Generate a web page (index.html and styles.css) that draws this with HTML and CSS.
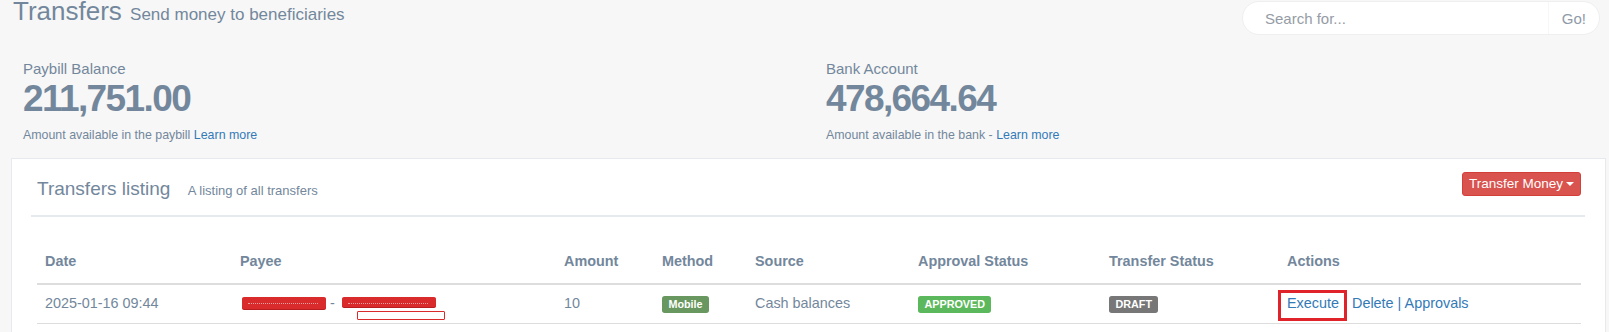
FILE: index.html
```html
<!DOCTYPE html>
<html lang="en">
<head>
<meta charset="utf-8">
<title>Transfers</title>
<link rel="stylesheet" href="styles.css">
</head>
<body>
<div class="page">
  <header class="page-title">
    <h3 class="title">Transfers <small>Send money to beneficiaries</small></h3>
    <form class="search">
      <input type="text" placeholder="Search for...">
      <button type="button">Go!</button>
    </form>
  </header>

  <section class="tiles">
    <div class="tile">
      <div class="tile-label">Paybill Balance</div>
      <div class="tile-count">211,751.00</div>
      <div class="tile-bottom">Amount available in the paybill <a href="#">Learn more</a></div>
    </div>
    <div class="tile">
      <div class="tile-label">Bank Account</div>
      <div class="tile-count">478,664.64</div>
      <div class="tile-bottom">Amount available in the bank - <a href="#">Learn more</a></div>
    </div>
  </section>

  <section class="panel">
    <div class="panel-title">
      <h2>Transfers listing <small>A listing of all transfers</small></h2>
      <button type="button" class="btn-danger">Transfer Money <span class="caret"></span></button>
    </div>
    <div class="panel-content">
      <table class="table">
        <thead>
          <tr>
            <th class="c-date">Date</th>
            <th class="c-payee">Payee</th>
            <th class="c-amount">Amount</th>
            <th class="c-method">Method</th>
            <th class="c-source">Source</th>
            <th class="c-approval">Approval Status</th>
            <th class="c-status">Transfer Status</th>
            <th class="c-actions">Actions</th>
          </tr>
        </thead>
        <tbody>
          <tr>
            <td>2025-01-16 09:44</td>
            <td><span class="redact r1"></span> - <span class="redact r2"></span></td>
            <td>10</td>
            <td><span class="label label-mobile">Mobile</span></td>
            <td>Cash balances</td>
            <td><span class="label label-success">APPROVED</span></td>
            <td><span class="label label-default">DRAFT</span></td>
            <td><a href="#" class="exec">Execute</a> <a href="#">Delete</a><span class="pipe"> | </span><a href="#">Approvals</a></td>
          </tr>
        </tbody>
      </table>
    </div>
  </section>
</div>
</body>
</html>
```

FILE: styles.css
```css
* { box-sizing: border-box; }
html, body { margin: 0; padding: 0; }
body {
  background: #F7F7F7;
  font-family: "Liberation Sans", Arial, sans-serif;
  font-size: 14.4px;
  color: #73879C;
  overflow: hidden;
}
a { color: #337ab7; text-decoration: none; }

.page { padding: 0 3px 0 11px; }

/* page title */
.page-title {
  display: flex;
  justify-content: space-between;
  align-items: flex-start;
  margin-top: -2px;
  height: 37px;
}
.title {
  margin: 0 0 0 2px;
  font-size: 26px;
  font-weight: 400;
  line-height: 26px;
  white-space: nowrap;
}
.title small { font-size: 17px; margin-left: 1px; }

.search {
  display: flex;
  width: 358px;
  height: 34px;
  margin: 3px 6px 0 0;
  background: #fff;
  border: 1px solid #efefef;
  border-radius: 25px;
}
.search input {
  flex: 1;
  min-width: 0;
  border: 0;
  background: transparent;
  padding: 0 0 0 22px;
  font: 15px "Liberation Sans", Arial, sans-serif;
  color: #555;
  border-radius: 25px 0 0 25px;
  outline: none;
}
.search input::placeholder { color: #959ca6; }
.search button {
  border: 0;
  border-left: 1px solid #f7f7f7;
  background: transparent;
  padding: 0 13px;
  font: 15px "Liberation Sans", Arial, sans-serif;
  color: #8f9aa8;
  border-radius: 0 25px 25px 0;
}

/* tiles */
.tiles {
  display: grid;
  grid-template-columns: 803px 1fr;
  margin-top: 24px;
}
.tile { padding-left: 12px; }
.tile-label { font-size: 15px; line-height: 20px; }
.tile-count {
  font-size: 37px;
  font-weight: 700;
  line-height: 40px;
  letter-spacing: -1.6px;
}
.tile-bottom {
  margin-top: 8px;
  font-size: 12.4px;
  line-height: 17px;
}

/* panel */
.panel {
  margin-top: 14px;
  background: #fff;
  border: 1px solid #E6E9ED;
  padding: 0 20px 0 19px;
  min-height: 220px;
}
.panel-title {
  display: flex;
  justify-content: space-between;
  align-items: flex-start;
  padding: 13px 4px 11px 6px;
  border-bottom: 2px solid #E6E9ED;
}
.panel-title h2 {
  margin: 3px 0 0;
  font-size: 19px;
  font-weight: 400;
  line-height: 27px;
  white-space: nowrap;
}
.panel-title h2 small { font-size: 13px; margin-left: 12px; }

.btn-danger {
  display: flex;
  align-items: center;
  height: 24px;
  padding: 0 6px;
  background: #d9534f;
  border: 1px solid #d43f3a;
  border-radius: 3px;
  color: #fff;
  font: 13.5px/1 "Liberation Sans", Arial, sans-serif;
}
.caret {
  width: 0;
  height: 0;
  margin-left: 3px;
  border-top: 4px solid #fff;
  border-left: 4px solid transparent;
  border-right: 4px solid transparent;
}

.panel-content { padding: 26px 4px 0 6px; }

/* table */
.table {
  width: 100%;
  border-collapse: separate;
  border-spacing: 0;
  table-layout: fixed;
}
.table th {
  text-align: left;
  font-weight: 700;
  padding: 8px 8px 12px;
  line-height: 20px;
  border-bottom: 2px solid #ddd;
  vertical-align: bottom;
  white-space: nowrap;
}
.table td {
  padding: 8px 8px 10px;
  line-height: 20px;
  border-bottom: 1px solid #ddd;
  white-space: nowrap;
}
.c-date { width: 195px; }
.c-payee { width: 324px; }
.c-amount { width: 98px; }
.c-method { width: 93px; }
.c-source { width: 163px; }
.c-approval { width: 191px; }
.c-status { width: 178px; }
.c-actions { width: 302px; }

.label {
  display: inline;
  font-size: 75%;
  font-weight: 700;
  line-height: 1;
  color: #fff;
  padding: .2em .6em .3em;
  border-radius: .25em;
  vertical-align: baseline;
}
.label-mobile { background: #68985f; }
.label-success { background: #5cb85c; }
.label-default { background: #777; }

/* redacted payee */
.redact {
  display: inline-block;
  position: relative;
  background: #d92a2c;
  border-radius: 2px;
  box-shadow: 0 1px 0 #b91d20;
}
.redact::before {
  content: "";
  position: absolute;
  left: 6px;
  right: 8px;
  top: 6px;
  border-top: 1px dotted rgba(255, 255, 255, 0.55);
}
.r1 { width: 84px; height: 12px; margin-left: 2px; vertical-align: -1px; }
.r2 { width: 94px; height: 10px; margin-left: 3px; vertical-align: 1px; }
.r2::after {
  content: "";
  position: absolute;
  left: 15px;
  top: 14px;
  width: 86px;
  height: 7px;
  background: #fff;
  border: 1.5px solid #d92a2c;
  border-radius: 1px;
}

/* actions */
.exec { position: relative; margin-right: 9px; }
.exec::after {
  content: "";
  position: absolute;
  left: -9px;
  right: -8px;
  top: -5px;
  bottom: -10px;
  border: 3px solid #e0232a;
}
.pipe { color: #337ab7; }
```
